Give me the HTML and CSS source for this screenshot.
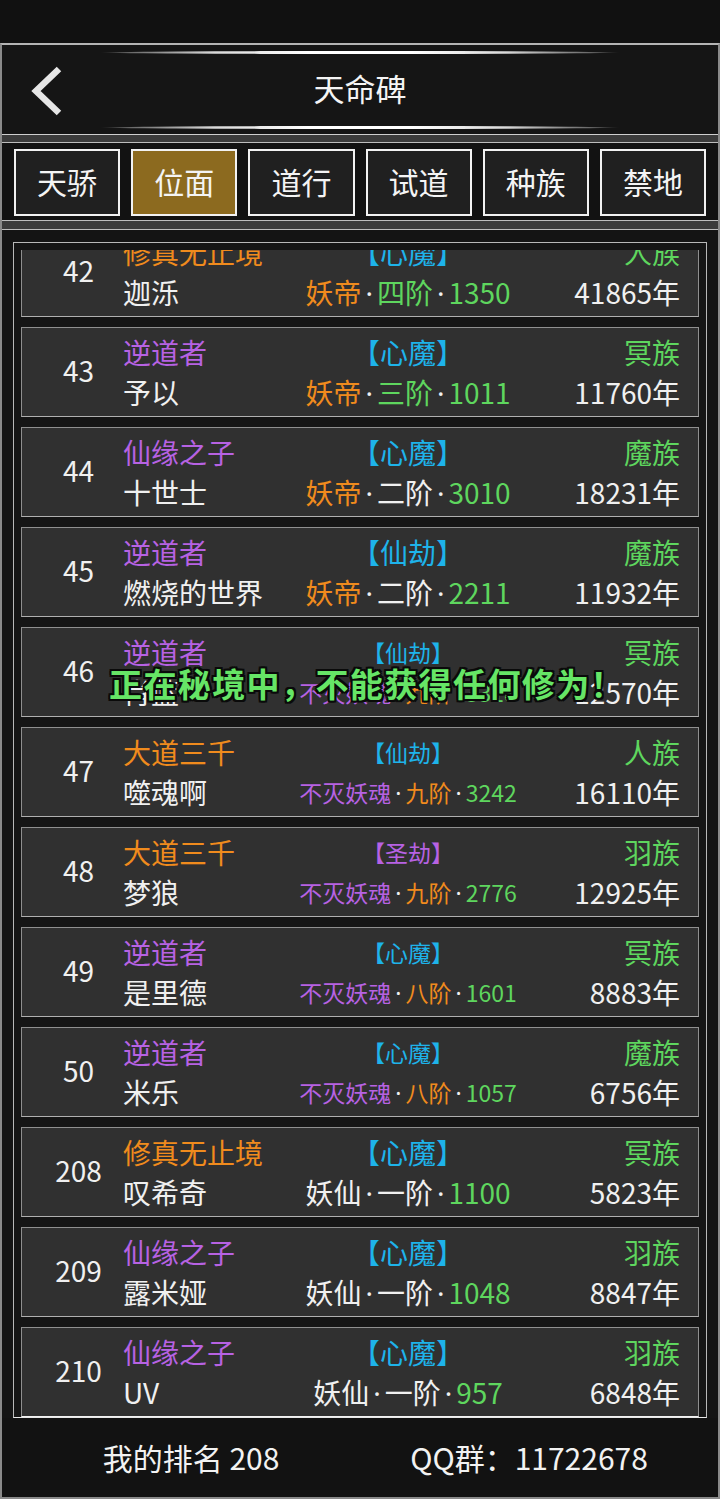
FILE: index.html
```html
<!DOCTYPE html>
<html lang="zh">
<head>
<meta charset="utf-8">
<title>天命碑</title>
<link rel="stylesheet" href="styles.css">
</head>
<body>
<div class="topband"></div>
<div class="frame">
  <header class="header">
    <div class="deco deco-top"></div>
    <div class="header-row">
      <svg class="back" width="40" height="50" viewBox="0 0 40 50"><polyline points="31,3 8,25 31,47" fill="none" stroke="#e6e6e6" stroke-width="6.5" stroke-linecap="butt" stroke-linejoin="miter"/></svg>
      <div class="title">天命碑</div>
    </div>
    <div class="deco deco-bottom"></div>
  </header>
  <div class="band band-a"></div>
  <nav class="tabs">
    <div class="tab">天骄</div>
    <div class="tab active">位面</div>
    <div class="tab">道行</div>
    <div class="tab">试道</div>
    <div class="tab">种族</div>
    <div class="tab">禁地</div>
  </nav>
  <div class="band band-b"></div>
  <section class="list-section">
    <div class="list-box">
      <div class="viewport">
        <div class="list">
          <div class="row">
            <div class="rank">42</div>
            <div class="l1 o">修真无止境</div>
            <div class="m1 c">【心魔】</div>
            <div class="r1 g">人族</div>
            <div class="l2">迦泺</div>
            <div class="m2"><span class="o">妖帝</span><span class="dot">·</span><span class="g">四阶</span><span class="dot">·</span><span class="g">1350</span></div>
            <div class="r2">41865年</div>
          </div>
          <div class="row">
            <div class="rank">43</div>
            <div class="l1 p">逆道者</div>
            <div class="m1 c">【心魔】</div>
            <div class="r1 g">冥族</div>
            <div class="l2">予以</div>
            <div class="m2"><span class="o">妖帝</span><span class="dot">·</span><span class="g">三阶</span><span class="dot">·</span><span class="g">1011</span></div>
            <div class="r2">11760年</div>
          </div>
          <div class="row">
            <div class="rank">44</div>
            <div class="l1 p">仙缘之子</div>
            <div class="m1 c">【心魔】</div>
            <div class="r1 g">魔族</div>
            <div class="l2">十世士</div>
            <div class="m2"><span class="o">妖帝</span><span class="dot">·</span>二阶<span class="dot">·</span><span class="g">3010</span></div>
            <div class="r2">18231年</div>
          </div>
          <div class="row">
            <div class="rank">45</div>
            <div class="l1 p">逆道者</div>
            <div class="m1 c">【仙劫】</div>
            <div class="r1 g">魔族</div>
            <div class="l2">燃烧的世界</div>
            <div class="m2"><span class="o">妖帝</span><span class="dot">·</span>二阶<span class="dot">·</span><span class="g">2211</span></div>
            <div class="r2">11932年</div>
          </div>
          <div class="row">
            <div class="rank">46</div>
            <div class="l1 p">逆道者</div>
            <div class="m1 c sm">【仙劫】</div>
            <div class="r1 g">冥族</div>
            <div class="l2">肖蓝</div>
            <div class="m2 sm"><span class="p">不灭妖魂</span><span class="dot">·</span><span class="o">九阶</span><span class="dot">·</span><span class="g">3318</span></div>
            <div class="r2">12570年</div>
          </div>
          <div class="row">
            <div class="rank">47</div>
            <div class="l1 o">大道三千</div>
            <div class="m1 c sm">【仙劫】</div>
            <div class="r1 g">人族</div>
            <div class="l2">噬魂啊</div>
            <div class="m2 sm"><span class="p">不灭妖魂</span><span class="dot">·</span><span class="o">九阶</span><span class="dot">·</span><span class="g">3242</span></div>
            <div class="r2">16110年</div>
          </div>
          <div class="row">
            <div class="rank">48</div>
            <div class="l1 o">大道三千</div>
            <div class="m1 p sm">【圣劫】</div>
            <div class="r1 g">羽族</div>
            <div class="l2">梦狼</div>
            <div class="m2 sm"><span class="p">不灭妖魂</span><span class="dot">·</span><span class="o">九阶</span><span class="dot">·</span><span class="g">2776</span></div>
            <div class="r2">12925年</div>
          </div>
          <div class="row">
            <div class="rank">49</div>
            <div class="l1 p">逆道者</div>
            <div class="m1 c sm">【心魔】</div>
            <div class="r1 g">冥族</div>
            <div class="l2">是里德</div>
            <div class="m2 sm"><span class="p">不灭妖魂</span><span class="dot">·</span><span class="o">八阶</span><span class="dot">·</span><span class="g">1601</span></div>
            <div class="r2">8883年</div>
          </div>
          <div class="row">
            <div class="rank">50</div>
            <div class="l1 p">逆道者</div>
            <div class="m1 c sm">【心魔】</div>
            <div class="r1 g">魔族</div>
            <div class="l2">米乐</div>
            <div class="m2 sm"><span class="p">不灭妖魂</span><span class="dot">·</span><span class="o">八阶</span><span class="dot">·</span><span class="g">1057</span></div>
            <div class="r2">6756年</div>
          </div>
          <div class="row">
            <div class="rank">208</div>
            <div class="l1 o">修真无止境</div>
            <div class="m1 c">【心魔】</div>
            <div class="r1 g">冥族</div>
            <div class="l2">叹希奇</div>
            <div class="m2">妖仙<span class="dot">·</span>一阶<span class="dot">·</span><span class="g">1100</span></div>
            <div class="r2">5823年</div>
          </div>
          <div class="row">
            <div class="rank">209</div>
            <div class="l1 p">仙缘之子</div>
            <div class="m1 c">【心魔】</div>
            <div class="r1 g">羽族</div>
            <div class="l2">露米娅</div>
            <div class="m2">妖仙<span class="dot">·</span>一阶<span class="dot">·</span><span class="g">1048</span></div>
            <div class="r2">8847年</div>
          </div>
          <div class="row">
            <div class="rank">210</div>
            <div class="l1 p">仙缘之子</div>
            <div class="m1 c">【心魔】</div>
            <div class="r1 g">羽族</div>
            <div class="l2">UV</div>
            <div class="m2">妖仙<span class="dot">·</span>一阶<span class="dot">·</span><span class="g">957</span></div>
            <div class="r2">6848年</div>
          </div>
        </div>
      </div>
      <div class="toast">正在秘境中，不能获得任何修为！</div>
    </div>
  </section>
  <footer class="footer">
    <div class="foot-item">我的排名 208</div>
    <div class="foot-item">QQ群：11722678</div>
  </footer>
</div>
</body>
</html>
```
FILE: styles.css
```css
* { box-sizing: border-box; }
html, body { margin: 0; padding: 0; }
body {
  width: 720px;
  height: 1499px;
  overflow: hidden;
  background: #111111;
  color: #f0f0f0;
  font-family: "Noto Sans CJK SC", "Noto Sans", sans-serif;
}
.topband { height: 43px; background: #111111; }
.frame {
  height: 1456px;
  border: 2px solid #b4b4b4;
  border-left-color: #8a8a8a;
  border-right-color: #8a8a8a;
  border-bottom-color: #8a8a8a;
  display: flex;
  flex-direction: column;
  background: #141414;
}
.header {
  height: 90px;
  background: #151515;
  border-bottom: 1px solid #cfcfcf;
  display: flex;
  flex-direction: column;
  align-items: center;
  padding-top: 6px;
}
.deco {
  width: 520px;
  height: 3px;
  border-radius: 50%;
  background: linear-gradient(to right, rgba(120,120,120,0) 0%, #6a6a6a 6%, #d8d8d8 22%, #ffffff 40%, #ffffff 60%, #d8d8d8 78%, #6a6a6a 94%, rgba(120,120,120,0) 100%);
}
.header-row {
  flex: 1;
  width: 100%;
  display: flex;
  align-items: center;
  justify-content: center;
  position: relative;
  padding-bottom: 5px;
}
.back { position: absolute; left: 26px; top: 12px; }
.title { font-size: 31px; color: #f4f4f4; }
.deco-bottom { margin-bottom: 5px; }
.band { background: #3b3b3b; }
.band-a { height: 8px; border-bottom: 1px solid #bdbdbd; }
.band-b { height: 10px; border-top: 1px solid #bdbdbd; border-bottom: 1px solid #bdbdbd; }
.tabs {
  height: 77px;
  background: #121212;
  display: flex;
  gap: 11px;
  padding: 6px 12px 0 12px;
}
.tab {
  width: 107px;
  height: 67px;
  border: 2px solid #f2f2f2;
  background: #202020;
  color: #f4f4f4;
  font-size: 30px;
  display: flex;
  align-items: center;
  justify-content: center;
  padding-bottom: 3px;
}
.tab.active { background: #8c6a1f; }
.list-section {
  padding: 12px 11px 0 11px;
  background: #141414;
}
.list-box {
  border: 1px solid #b8b8b8;
  border-bottom-color: #e8e8e8;
  padding: 7px 7px 0 7px;
  position: relative;
  background: #151515;
}
.viewport {
  height: 1167px;
  overflow: hidden;
}
.list {
  margin-top: -23px;
  display: flex;
  flex-direction: column;
  gap: 10px;
}
.row {
  height: 90px;
  background: #303030;
  border: 1px solid #8f8f8f;
  border-bottom-color: #b0b0b0;
  display: grid;
  grid-template-columns: 101px 160px 250px 1fr;
  grid-template-rows: 40px 40px;
  padding: 4px 18px 0 0;
  font-size: 28px;
  line-height: 40px;
  white-space: nowrap;
}
.row:last-child { border-bottom-color: #f2f2f2; }
.rank {
  grid-row: 1 / 3;
  grid-column: 1;
  display: flex;
  align-items: center;
  justify-content: center;
  padding-left: 12px;
  margin-top: -4px;
  color: #f0f0f0;
}
.l1 { grid-row: 1; grid-column: 2; }
.m1 { grid-row: 1; grid-column: 3; text-align: center; }
.r1 { grid-row: 1; grid-column: 4; text-align: right; }
.l2 { grid-row: 2; grid-column: 2; color: #f0f0f0; }
.m2 { grid-row: 2; grid-column: 3; text-align: center; color: #f0f0f0; }
.r2 { grid-row: 2; grid-column: 4; text-align: right; color: #f0f0f0; }
.dot { font-family: "Noto Sans", sans-serif; color: #f0f0f0; margin: 0 4px; }
.sm { font-size: 23px; }
.sm .dot { margin: 0 4px; }
.o { color: #f08b1d; }
.g { color: #5ed65e; }
.p { color: #b762e3; }
.c { color: #1eb3ea; }
.toast {
  position: absolute;
  left: 0;
  right: 0;
  top: 416px;
  text-align: center;
  padding-left: 14px;
  font-size: 33px;
  font-weight: 700;
  letter-spacing: 1.4px;
  line-height: 48px;
  color: #66e566;
  text-shadow: -2px -2px 0 #0a0a0a, 2px -2px 0 #0a0a0a, -2px 2px 0 #0a0a0a, 2px 2px 0 #0a0a0a, 0 -2px 0 #0a0a0a, 0 2px 0 #0a0a0a, -2px 0 0 #0a0a0a, 2px 0 0 #0a0a0a;
}
.footer {
  flex: 1;
  display: grid;
  grid-template-columns: 1fr 1fr;
  align-items: center;
  padding: 0 20px 2px 20px;
  font-size: 30px;
  color: #f2f2f2;
  background: #121212;
}
.foot-item { text-align: center; }
```
